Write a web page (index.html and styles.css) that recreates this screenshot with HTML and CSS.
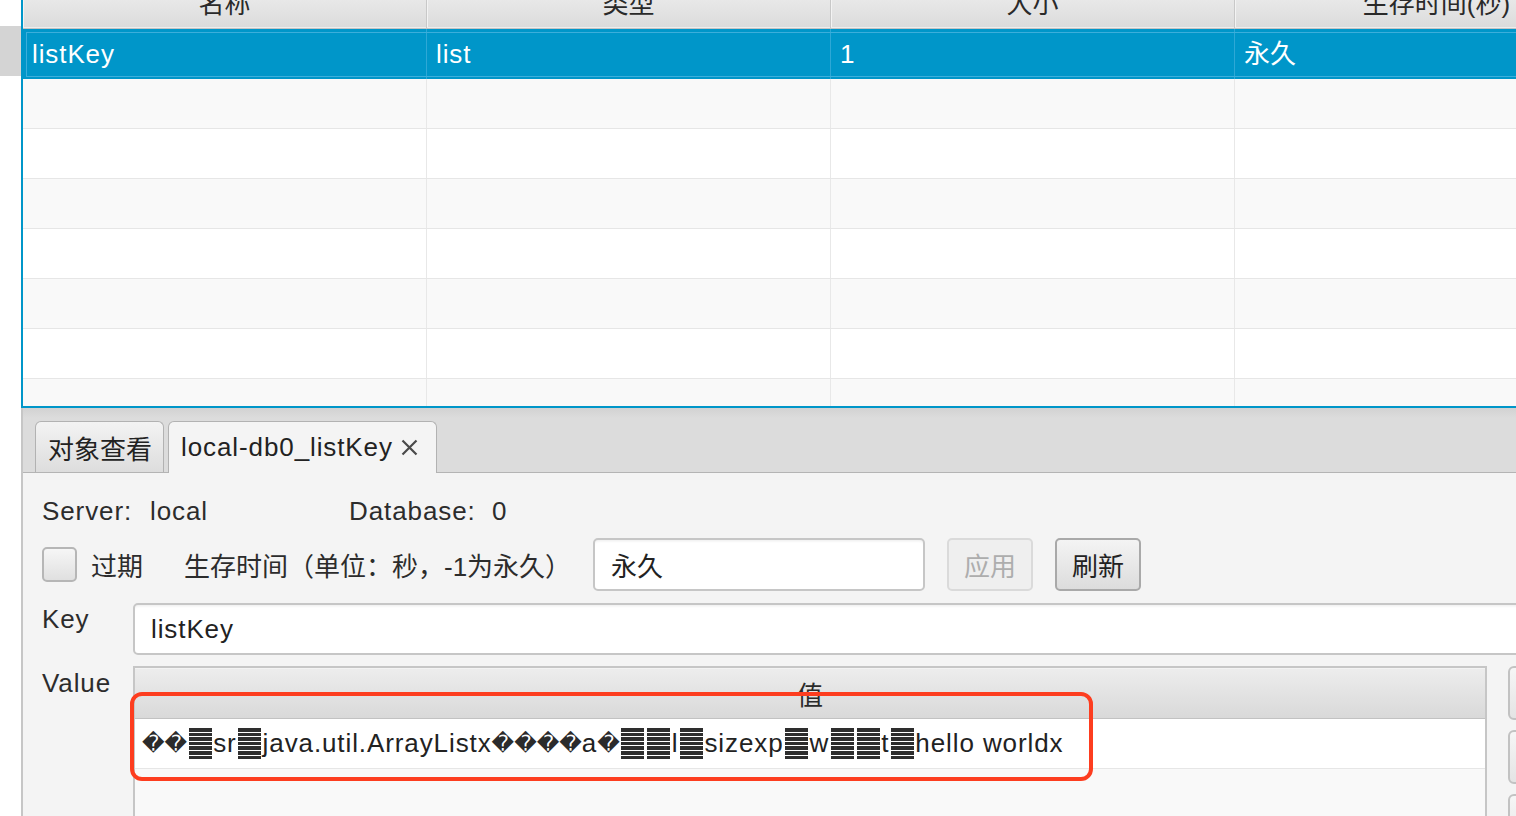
FILE: index.html
```html
<!DOCTYPE html>
<html lang="zh-CN">
<head>
<meta charset="utf-8">
<title>Redis</title>
<link rel="stylesheet" href="styles.css">
</head>
<body>
<div class="app">
  <div class="side"><div class="side-block"></div></div>
  <div class="main">
    <div class="grid">
      <div class="ghead">
        <div class="hc"><span>名称</span></div>
        <div class="hc"><span>类型</span></div>
        <div class="hc"><span>大小</span></div>
        <div class="hc"><span>生存时间(秒)</span></div>
      </div>
      <div class="row sel">
        <div class="c">listKey</div><div class="c">list</div><div class="c">1</div><div class="c cjk">永久</div>
      </div>
      <div class="row odd"><div class="c"></div><div class="c"></div><div class="c"></div><div class="c"></div></div>
      <div class="row even"><div class="c"></div><div class="c"></div><div class="c"></div><div class="c"></div></div>
      <div class="row odd"><div class="c"></div><div class="c"></div><div class="c"></div><div class="c"></div></div>
      <div class="row even"><div class="c"></div><div class="c"></div><div class="c"></div><div class="c"></div></div>
      <div class="row odd"><div class="c"></div><div class="c"></div><div class="c"></div><div class="c"></div></div>
      <div class="row even"><div class="c"></div><div class="c"></div><div class="c"></div><div class="c"></div></div>
      <div class="row odd"><div class="c"></div><div class="c"></div><div class="c"></div><div class="c"></div></div>
    </div>
    <div class="lower">
      <div class="tabs">
        <div class="tab cjk">对象查看</div>
        <div class="tab active">local-db0_listKey<svg class="x" width="17" height="17" viewBox="0 0 17 17"><path d="M1.5 1.5 L15.5 15.5 M15.5 1.5 L1.5 15.5" stroke="#4a4a4a" stroke-width="2.2" fill="none"/></svg></div>
      </div>
      <div class="content">
        <div class="r-server">
          <span class="l1">Server:</span><span class="v1">local</span><span class="l2">Database:</span><span>0</span>
        </div>
        <div class="r-exp">
          <div class="chk"></div>
          <span class="exp-l cjk">过期</span>
          <span class="ttl-l cjk">生存时间（单位：秒，-1为永久）</span>
          <div class="field f-ttl cjk">永久</div>
          <div class="btn dis cjk">应用</div>
          <div class="btn on cjk">刷新</div>
        </div>
        <div class="r-key">
          <span class="lbl">Key</span>
          <div class="field f-key">listKey</div>
        </div>
        <div class="r-val">
          <span class="lbl lbl-v">Value</span>
          <div class="vtable">
            <div class="vhead cjk">值</div>
            <div class="vrow"><span class="rc">&#xFFFD;</span><span class="rc">&#xFFFD;</span><span class="cb"></span>sr<span class="cb"></span>java.util.ArrayListx<span class="rc">&#xFFFD;</span><span class="rc">&#xFFFD;</span><span class="rc">&#xFFFD;</span><span class="rc">&#xFFFD;</span>a<span class="rc">&#xFFFD;</span><span class="cb"></span><span class="cb"></span>l<span class="cb"></span>sizexp<span class="cb"></span>w<span class="cb"></span><span class="cb"></span>t<span class="cb"></span>hello worldx</div>
            <div class="vrow2"></div>
          </div>
          <div class="sbtns">
            <div class="sbtn"></div>
            <div class="sbtn"></div>
            <div class="sbtn"></div>
          </div>
        </div>
      </div>
    </div>
  </div>
</div>
<div class="annot"></div>
</body>
</html>
```
FILE: styles.css
```css
* { box-sizing: border-box; }
html, body { margin: 0; padding: 0; }
body {
  width: 1516px;
  height: 816px;
  overflow: hidden;
  background: #fff;
  font-family: "Liberation Sans", "Noto Sans CJK SC", sans-serif;
  font-size: 26px;
  letter-spacing: 0.9px;
  color: #333;
  position: relative;
}
.cjk { letter-spacing: 0; }
.app { display: flex; height: 816px; }
.side { width: 21px; flex: none; background: #fff; padding-top: 26px; }
.side-block { height: 50px; background: #d4d4d4; }
.main { flex: 1; min-width: 0; display: flex; flex-direction: column; }

/* top grid */
.grid {
  height: 408px;
  flex: none;
  border-left: 2px solid #0096c9;
  border-bottom: 2px solid #0096c9;
  overflow: hidden;
  background: #f9f9f9;
}
.ghead, .row { display: grid; grid-template-columns: repeat(4, 404px); }
.hc {
  height: 29px;
  background: linear-gradient(#e8e8e8, #dbdbdb);
  border-right: 1px solid #c8c8c8;
  border-bottom: 1px solid #c4c4c4;
  box-shadow: inset 0 -1px 0 #eeeeee, inset 1px 0 0 #f3f3f3;
  display: flex;
  align-items: flex-end;
  justify-content: center;
  overflow: hidden;
  color: #2a2a2a;
  letter-spacing: 0;
}
.hc span { line-height: 30px; padding-bottom: 9px; white-space: nowrap; }
.row { height: 50px; border-bottom: 1px solid #e6e6e6; }
.row.odd { background: #f9f9f9; }
.row.even { background: #fff; }
.row .c {
  border-right: 1px solid #e8e8e8;
  padding-left: 9px;
  line-height: 49px;
  white-space: nowrap;
}
.row.sel { background: #0096c9; color: #fff; position: relative; border-bottom: none; }
.row.sel .c { border-right-color: #2ea8d6; line-height: 50px; }
.row.sel::after {
  content: "";
  position: absolute;
  top: 3px; bottom: 2px; left: 3px; right: 0;
  border: 1px solid #3caedb;
  border-right: none;
  pointer-events: none;
}

/* lower pane */
.lower {
  flex: 1;
  border-left: 2px solid #c6c6c6;
  background: #f4f4f4;
  display: flex;
  flex-direction: column;
}
.tabs {
  height: 65px;
  flex: none;
  background: linear-gradient(#d2d2d2, #dcdcdc 10px);
  border-bottom: 1px solid #b4b4b4;
  display: flex;
  align-items: flex-end;
  padding-left: 12px;
  gap: 4px;
}
.tab {
  height: 51px;
  padding: 0 11px 0 12px;
  border: 1px solid #b2b2b2;
  border-bottom: none;
  border-radius: 6px 6px 0 0;
  background: linear-gradient(#f3f3f3, #dddddd);
  display: flex;
  align-items: center;
  color: #222;
  white-space: nowrap;
}
.tab.active {
  background: #f4f4f4;
  height: 52px;
  margin-bottom: -1px;
  padding: 0 18px 0 12px;
}
.x { margin-left: 8px; }

.content { padding: 17px 0 0 19px; display: flex; flex-direction: column; color: #2c2c2c; }
.r-server { height: 42px; display: flex; align-items: center; white-space: nowrap; }
.l1 { width: 108px; }
.v1 { width: 199px; }
.l2 { width: 143px; }

.r-exp { margin-top: 6px; height: 53px; display: flex; align-items: center; white-space: nowrap; }
.chk {
  width: 35px; height: 35px; flex: none;
  border: 2px solid #b6b6b6;
  border-radius: 5px;
  background: linear-gradient(#f6f6f6, #e0e0e0);
  margin-right: 14px;
}
.exp-l { width: 93px; flex: none; }
.ttl-l { width: 409px; flex: none; }
.field {
  background: #fff;
  border: 2px solid #c6c6c6;
  border-radius: 5px;
  box-shadow: inset 0 3px 3px -2px rgba(0, 0, 0, 0.08);
  display: flex;
  align-items: center;
  padding-left: 16px;
  color: #222;
  flex: none;
}
.f-ttl { width: 332px; height: 53px; }
.btn {
  width: 86px; height: 53px; flex: none;
  border-radius: 5px;
  display: flex; align-items: center; justify-content: center;
  margin-left: 22px;
}
.btn.dis { border: 2px solid #dadada; background: #efefef; color: #adadad; }
.btn.on { border: 2px solid #a9a9a9; background: linear-gradient(#f4f4f4, #dcdcdc); color: #222; }

.r-key { margin-top: 12px; display: flex; align-items: flex-start; }
.lbl { width: 91px; flex: none; line-height: 32px; }
.f-key { width: 1420px; height: 52px; }

.r-val { margin-top: 11px; display: flex; align-items: flex-start; }
.lbl-v { line-height: 34px; }
.vtable {
  width: 1354px; height: 170px; flex: none;
  border: 2px solid #c6c6c6;
  border-bottom: none;
  background: #f9f9f9;
  display: flex; flex-direction: column;
}
.vhead {
  height: 51px; flex: none;
  background: linear-gradient(#ededed, #d9d9d9);
  border-bottom: 1px solid #c2c2c2;
  box-shadow: inset 0 1px 0 #f3f3f3;
  display: flex; align-items: center; justify-content: center;
  color: #2a2a2a;
}
.vrow {
  height: 50px; flex: none;
  background: #fff;
  border-bottom: 1px solid #e6e6e6;
  display: flex; align-items: center;
  padding-left: 7px;
  white-space: nowrap;
  color: #222;
}
.vrow2 { flex: 1; background: #f9f9f9; }
.rc { font-family: "DejaVu Sans", sans-serif; font-size: 22px; color: #2b2b2b; letter-spacing: 0; }
.cb {
  display: inline-block;
  width: 23px; height: 32px;
  margin: 0 1.5px;
  background: repeating-linear-gradient(to bottom, #2e2e2e 0 3.6px, #ffffff 3.6px 4.6px);
  flex: none;
}
.sbtns { margin-left: 21px; display: flex; flex-direction: column; gap: 10px; flex: none; }
.sbtn {
  width: 60px; height: 54px;
  border: 2px solid #c2c2c2;
  border-radius: 6px;
  background: linear-gradient(#f6f6f6, #e4e4e4);
}

.annot {
  position: absolute;
  left: 130px; top: 692px;
  width: 963px; height: 89px;
  border: 4px solid #fd3d1f;
  border-radius: 12px;
  pointer-events: none;
}
```
